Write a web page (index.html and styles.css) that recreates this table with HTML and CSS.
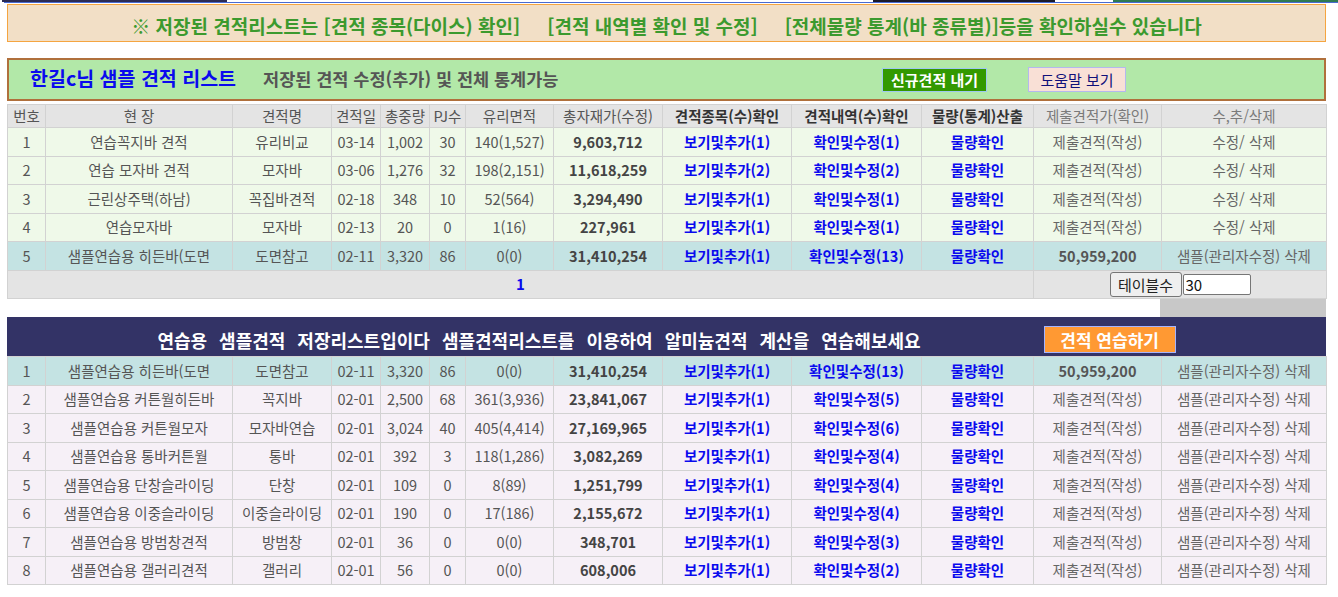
FILE: index.html
```html
<!DOCTYPE html>
<html lang="ko">
<head>
<meta charset="utf-8">
<title>견적 리스트</title>
<link rel="stylesheet" href="styles.css">
</head>
<body>
<div class="topbar">
  <span class="tb tb-navy"></span>
  <span class="tb tb-gap1"></span>
  <span class="tb tb-black"></span>
  <span class="tb tb-gap2"></span>
  <span class="tb tb-green"></span>
</div>
<div class="topline"></div>
<div class="page">
  <div class="notice">※ 저장된 견적리스트는 [견적 종목(다이스) 확인]<span class="gap"></span>[견적 내역별 확인 및 수정]<span class="gap"></span>[전체물량 통계(바 종류별)]등을 확인하실수 있습니다</div>

  <div class="listhead">
    <div class="lh-left">
      <span class="lh-title">한길c님 샘플 견적 리스트</span>
      <span class="lh-sub">저장된 견적 수정(추가) 및 전체 통계가능</span>
    </div>
    <div class="lh-buttons">
      <button class="btn-new">신규견적 내기</button>
      <button class="btn-help">도움말 보기</button>
    </div>
  </div>

  <table class="grid">
    <colgroup>
      <col class="c1"><col class="c2"><col class="c3"><col class="c4"><col class="c5"><col class="c6"><col class="c7"><col class="c8"><col class="c9"><col class="c10"><col class="c11"><col class="c12"><col class="c13">
    </colgroup>
    <thead>
      <tr class="hd">
        <th>번호</th><th>현 장</th><th>견적명</th><th>견적일</th><th>총중량</th><th>PJ수</th><th>유리면적</th><th>총자재가(수정)</th><th class="hb">견적종목(수)확인</th><th class="hb">견적내역(수)확인</th><th class="hb">물량(통계)산출</th><th class="hl">제출견적가(확인)</th><th class="hl">수,추/삭제</th>
      </tr>
    </thead>
    <tbody>
      <tr class="g"><td>1</td><td>연습꼭지바 견적</td><td>유리비교</td><td>03-14</td><td>1,002</td><td>30</td><td>140(1,527)</td><td class="amt">9,603,712</td><td class="lk">보기및추가(1)</td><td class="lk">확인및수정(1)</td><td class="lk">물량확인</td><td class="lt">제출견적(작성)</td><td class="lt">수정/ 삭제</td></tr>
      <tr class="g"><td>2</td><td>연습 모자바 견적</td><td>모자바</td><td>03-06</td><td>1,276</td><td>32</td><td>198(2,151)</td><td class="amt">11,618,259</td><td class="lk">보기및추가(2)</td><td class="lk">확인및수정(2)</td><td class="lk">물량확인</td><td class="lt">제출견적(작성)</td><td class="lt">수정/ 삭제</td></tr>
      <tr class="g"><td>3</td><td>근린상주택(하남)</td><td>꼭집바견적</td><td>02-18</td><td>348</td><td>10</td><td>52(564)</td><td class="amt">3,294,490</td><td class="lk">보기및추가(1)</td><td class="lk">확인및수정(1)</td><td class="lk">물량확인</td><td class="lt">제출견적(작성)</td><td class="lt">수정/ 삭제</td></tr>
      <tr class="g"><td>4</td><td>연습모자바</td><td>모자바</td><td>02-13</td><td>20</td><td>0</td><td>1(16)</td><td class="amt">227,961</td><td class="lk">보기및추가(1)</td><td class="lk">확인및수정(1)</td><td class="lk">물량확인</td><td class="lt">제출견적(작성)</td><td class="lt">수정/ 삭제</td></tr>
      <tr class="t"><td>5</td><td>샘플연습용 히든바(도면</td><td>도면참고</td><td>02-11</td><td>3,320</td><td>86</td><td>0(0)</td><td class="amt">31,410,254</td><td class="lk">보기및추가(1)</td><td class="lk">확인및수정(13)</td><td class="lk">물량확인</td><td class="amt2">50,959,200</td><td class="lt">샘플(관리자수정) 삭제</td></tr>
      <tr class="pg">
        <td colspan="11" class="pnum">1</td>
        <td colspan="2" class="pctl"><button class="btn-cnt">테이블수</button><input class="in-cnt" type="text" value="30"></td>
      </tr>
    </tbody>
  </table>

  <div class="spacer"><div class="sp-white"></div><div class="sp-gray"></div></div>

  <div class="banner">
    <span class="bn-text">연습용 샘플견적 저장리스트입이다 샘플견적리스트를 이용하여 알미늄견적 계산을 연습해보세요</span>
    <button class="btn-practice">견적 연습하기</button>
  </div>

  <table class="grid grid2">
    <colgroup>
      <col class="c1"><col class="c2"><col class="c3"><col class="c4"><col class="c5"><col class="c6"><col class="c7"><col class="c8"><col class="c9"><col class="c10"><col class="c11"><col class="c12"><col class="c13">
    </colgroup>
    <tbody>
      <tr class="t"><td>1</td><td>샘플연습용 히든바(도면</td><td>도면참고</td><td>02-11</td><td>3,320</td><td>86</td><td>0(0)</td><td class="amt">31,410,254</td><td class="lk">보기및추가(1)</td><td class="lk">확인및수정(13)</td><td class="lk">물량확인</td><td class="amt2">50,959,200</td><td class="lt">샘플(관리자수정) 삭제</td></tr>
      <tr class="v"><td>2</td><td>샘플연습용 커튼월히든바</td><td>꼭지바</td><td>02-01</td><td>2,500</td><td>68</td><td>361(3,936)</td><td class="amt">23,841,067</td><td class="lk">보기및추가(1)</td><td class="lk">확인및수정(5)</td><td class="lk">물량확인</td><td class="lt">제출견적(작성)</td><td class="lt">샘플(관리자수정) 삭제</td></tr>
      <tr class="v"><td>3</td><td>샘플연습용 커튼월모자</td><td>모자바연습</td><td>02-01</td><td>3,024</td><td>40</td><td>405(4,414)</td><td class="amt">27,169,965</td><td class="lk">보기및추가(1)</td><td class="lk">확인및수정(6)</td><td class="lk">물량확인</td><td class="lt">제출견적(작성)</td><td class="lt">샘플(관리자수정) 삭제</td></tr>
      <tr class="v"><td>4</td><td>샘플연습용 통바커튼월</td><td>통바</td><td>02-01</td><td>392</td><td>3</td><td>118(1,286)</td><td class="amt">3,082,269</td><td class="lk">보기및추가(1)</td><td class="lk">확인및수정(4)</td><td class="lk">물량확인</td><td class="lt">제출견적(작성)</td><td class="lt">샘플(관리자수정) 삭제</td></tr>
      <tr class="v"><td>5</td><td>샘플연습용 단창슬라이딩</td><td>단창</td><td>02-01</td><td>109</td><td>0</td><td>8(89)</td><td class="amt">1,251,799</td><td class="lk">보기및추가(1)</td><td class="lk">확인및수정(4)</td><td class="lk">물량확인</td><td class="lt">제출견적(작성)</td><td class="lt">샘플(관리자수정) 삭제</td></tr>
      <tr class="v"><td>6</td><td>샘플연습용 이중슬라이딩</td><td>이중슬라이딩</td><td>02-01</td><td>190</td><td>0</td><td>17(186)</td><td class="amt">2,155,672</td><td class="lk">보기및추가(1)</td><td class="lk">확인및수정(4)</td><td class="lk">물량확인</td><td class="lt">제출견적(작성)</td><td class="lt">샘플(관리자수정) 삭제</td></tr>
      <tr class="v"><td>7</td><td>샘플연습용 방범창견적</td><td>방범창</td><td>02-01</td><td>36</td><td>0</td><td>0(0)</td><td class="amt">348,701</td><td class="lk">보기및추가(1)</td><td class="lk">확인및수정(3)</td><td class="lk">물량확인</td><td class="lt">제출견적(작성)</td><td class="lt">샘플(관리자수정) 삭제</td></tr>
      <tr class="v"><td>8</td><td>샘플연습용 갤러리견적</td><td>갤러리</td><td>02-01</td><td>56</td><td>0</td><td>0(0)</td><td class="amt">608,006</td><td class="lk">보기및추가(1)</td><td class="lk">확인및수정(2)</td><td class="lk">물량확인</td><td class="lt">제출견적(작성)</td><td class="lt">샘플(관리자수정) 삭제</td></tr>
    </tbody>
  </table>
</div>
</body>
</html>
```

FILE: styles.css
```css
* { box-sizing: border-box; }

body {
  margin: 0;
  background: #ffffff;
  font-family: "Noto Sans CJK KR", "Noto Sans", sans-serif;
  color: #555555;
}

.topbar {
  display: flex;
  height: 2px;
}
.tb { display: block; height: 2px; }
.tb-navy { width: 225px; margin-left: 2px; background: #2b2b55; }
.tb-gap1 { width: 646px; }
.tb-black { width: 182px; background: #1a1a2a; }
.tb-gap2 { width: 58px; }
.tb-green { flex: 1; background: #2f7a52; }
.topline { height: 1px; background: #4a6ad0; margin-left: 4px; }

.page {
  padding: 0 12px 0 7px;
  width: 1338px;
}

.notice {
  margin-top: 1px;
  height: 38px;
  border: 1px solid #f5a540;
  background: #f2dfc6;
  color: #3c9a2e;
  font-size: 19px;
  font-weight: bold;
  line-height: 36px;
  padding-top: 3px;
  text-align: center;
  white-space: nowrap;
}
.notice .gap { display: inline-block; width: 27px; }

.listhead {
  margin-top: 16px;
  height: 43px;
  border: 2px solid #b0703c;
  background: #b2e8a8;
  display: flex;
  align-items: center;
}
.lh-left {
  width: 873px;
  padding-left: 21px;
  display: flex;
  align-items: center;
  gap: 27px;
  white-space: nowrap;
}
.lh-title {
  color: #0a0aee;
  font-size: 19.5px;
  font-weight: bold;
  margin-top: -4px;
}
.lh-sub {
  color: #555555;
  font-size: 17.5px;
  font-weight: bold;
  margin-top: -2px;
}
.lh-buttons {
  display: flex;
  align-items: center;
  gap: 41px;
}
.btn-new {
  width: 105px;
  height: 24px;
  background: #339900;
  border: 1px solid #9ec8f0;
  color: #ffffff;
  font-family: inherit;
  font-size: 15px;
  font-weight: bold;
  padding: 0;
  line-height: 20px;
  margin-top: 1px;
}
.btn-help {
  width: 98px;
  height: 25px;
  background: #f9e0d6;
  border: 1px solid #b4b8ee;
  color: #10107a;
  font-family: inherit;
  font-size: 15px;
  padding: 0;
  line-height: 21px;
}

.grid {
  margin-top: 3px;
  width: 1319px;
  border-collapse: collapse;
  table-layout: fixed;
  font-size: 14.5px;
}
.grid2 { margin-top: 0; }
.c1 { width: 38px; }
.c2 { width: 187px; }
.c3 { width: 99px; }
.c4 { width: 49px; }
.c5 { width: 49px; }
.c6 { width: 36px; }
.c7 { width: 88px; }
.c8 { width: 109px; }
.c9 { width: 129px; }
.c10 { width: 130px; }
.c11 { width: 112px; }
.c12 { width: 128px; }
.c13 { width: 165px; }

.grid th, .grid td {
  border: 1px solid #d2d2d2;
  text-align: center;
  vertical-align: middle;
  padding: 0;
  white-space: nowrap;
  overflow: hidden;
  line-height: 20px;
}
.grid th {
  height: 23px;
  background: #e4e4e4;
  font-weight: normal;
  color: #555555;
}
.grid th.hb { font-weight: bold; color: #333333; }
.grid th.hl { color: #7a7a7a; }
.grid td { height: 28.5px; color: #555555; }

.grid tr.g td { background: #eff9e9; }
.grid tr.t td { background: #c4e3e3; }
.grid tr.v td { background: #f6f0f7; }
.grid td.amt { font-weight: bold; color: #444444; }
.grid td.amt2 { font-weight: bold; color: #555555; }
.grid td.lk { font-weight: bold; color: #0a0aee; }
.grid td.lt { color: #666666; }

.grid tr.pg td { background: #e4e4e4; height: 28.5px; }
.grid td.pnum { color: #0a0aee; font-weight: bold; font-size: 15px; }
.grid td.pctl { font-size: 0; line-height: 0; }
.btn-cnt {
  height: 25px;
  width: 72px;
  background: #efefef;
  border: 1px solid #767676;
  border-radius: 3px;
  color: #222222;
  font-family: inherit;
  font-size: 15px;
  line-height: 21px;
  padding: 0;
  vertical-align: middle;
}
.in-cnt {
  width: 68px;
  height: 21px;
  margin-left: 1px;
  border: 1px solid #767676;
  border-radius: 2px;
  font-family: "Noto Sans CJK KR", sans-serif;
  font-size: 15px;
  line-height: 19px;
  padding: 0 2px;
  color: #111111;
  vertical-align: middle;
}

.spacer {
  display: flex;
  height: 18px;
}
.sp-white { width: 1153px; background: #ffffff; }
.sp-gray { flex: 1; background: #c8c8c8; }

.banner {
  height: 39px;
  background: #333366;
  display: flex;
  justify-content: center;
  align-items: center;
  padding-top: 6px;
  gap: 123px;
}
.bn-text {
  color: #ffffff;
  font-size: 18px;
  font-weight: bold;
  word-spacing: 7px;
  white-space: nowrap;
}
.btn-practice {
  width: 132px;
  height: 27px;
  background: #ff9933;
  border: 1px solid #a4b4ff;
  color: #ffffff;
  font-family: inherit;
  font-size: 17px;
  font-weight: bold;
  padding: 0;
  line-height: 23px;
}
```
